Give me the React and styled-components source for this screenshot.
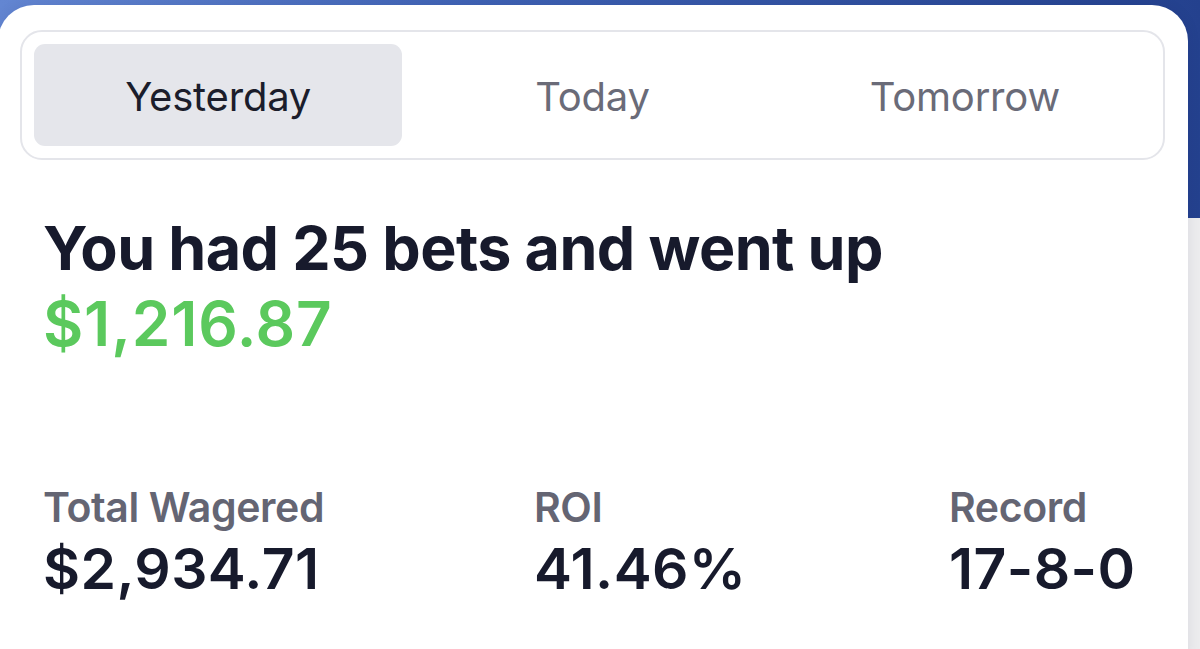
import React, { useState } from 'react';
import styled, { createGlobalStyle } from 'styled-components';

const GlobalStyle = createGlobalStyle`
    html, body {
        margin: 0;
        padding: 0;
        width: 100%;
        height: 100%;
        overflow: hidden;
    }
    body {
        font-family: Inter, "Noto Sans", sans-serif;
        -webkit-font-smoothing: antialiased;
    }
`;

const Page = styled.div`
    width: 1200px;
    height: 649px;
    overflow: hidden;
    background:
        linear-gradient(90deg, #6386d2 0%, #3f62b4 40%, #24418e 100%) top / 100% 218px no-repeat,
        #ececee;
    padding-top: 5px;
    box-sizing: border-box;
`;

const Card = styled.div`
    margin-left: -2px;
    width: 1190px;
    height: 680px;
    background: #ffffff;
    border-radius: 36px;
    box-shadow: 0 0 14px rgba(20, 30, 60, 0.08);
    padding: 25px 23px 0 22px;
    box-sizing: border-box;
    display: flex;
    flex-direction: column;
`;

const Tabs = styled.div`
    display: grid;
    grid-template-columns: repeat(3, 1fr);
    border: 2px solid #e4e5ea;
    border-radius: 22px;
    padding: 12px;
    height: 130px;
    box-sizing: border-box;
`;

const Tab = styled.button`
    border: none;
    border-radius: 11px;
    background: ${(p) => (p.$active ? '#e5e6eb' : 'transparent')};
    color: ${(p) => (p.$active ? '#1b1d2b' : '#6a6b78')};
    font-family: Inter, "Noto Sans", sans-serif;
    font-size: 40px;
    font-weight: 400;
    letter-spacing: -0.2px;
    cursor: pointer;
    padding: 2px 0 0;
    margin-right: ${(p) => (p.$active ? '4px' : '0')};
`;

const Summary = styled.div`
    padding: 51px 0 0 23px;
`;

const Headline = styled.div`
    font-size: 61px;
    font-weight: 700;
    color: #171a2c;
    line-height: 74px;
    letter-spacing: -0.6px;
`;

const Gain = styled.div`
    font-size: 62px;
    font-weight: 600;
    color: #5bc95d;
    line-height: 78px;
    letter-spacing: 0.8px;
`;

const Stats = styled.div`
    display: grid;
    grid-template-columns: 491px 415px 1fr;
    padding: 119px 0 0 23px;
`;

const Stat = styled.div`
    display: flex;
    flex-direction: column;
`;

const Label = styled.div`
    font-size: 41px;
    font-weight: 600;
    color: #646573;
    line-height: 50px;
    letter-spacing: -0.4px;
`;

const Value = styled.div`
    font-size: 57px;
    font-weight: 600;
    color: #171a2c;
    line-height: 73px;
    letter-spacing: 0.4px;
`;

const days = ['Yesterday', 'Today', 'Tomorrow'];

const stats = [
    { label: 'Total Wagered', value: '$2,934.71' },
    { label: 'ROI', value: '41.46%' },
    { label: 'Record', value: '17-8-0' },
];

export default function App() {
    const [day, setDay] = useState('Yesterday');

    return (
        <>
            <GlobalStyle />
            <Page>
                <Card>
                    <Tabs>
                        {days.map((d) => (
                            <Tab key={d} $active={d === day} onClick={() => setDay(d)}>
                                {d}
                            </Tab>
                        ))}
                    </Tabs>
                    <Summary>
                        <Headline>You had 25 bets and went up</Headline>
                        <Gain>$1,216.87</Gain>
                    </Summary>
                    <Stats>
                        {stats.map((s) => (
                            <Stat key={s.label}>
                                <Label>{s.label}</Label>
                                <Value>{s.value}</Value>
                            </Stat>
                        ))}
                    </Stats>
                </Card>
            </Page>
        </>
    );
}
